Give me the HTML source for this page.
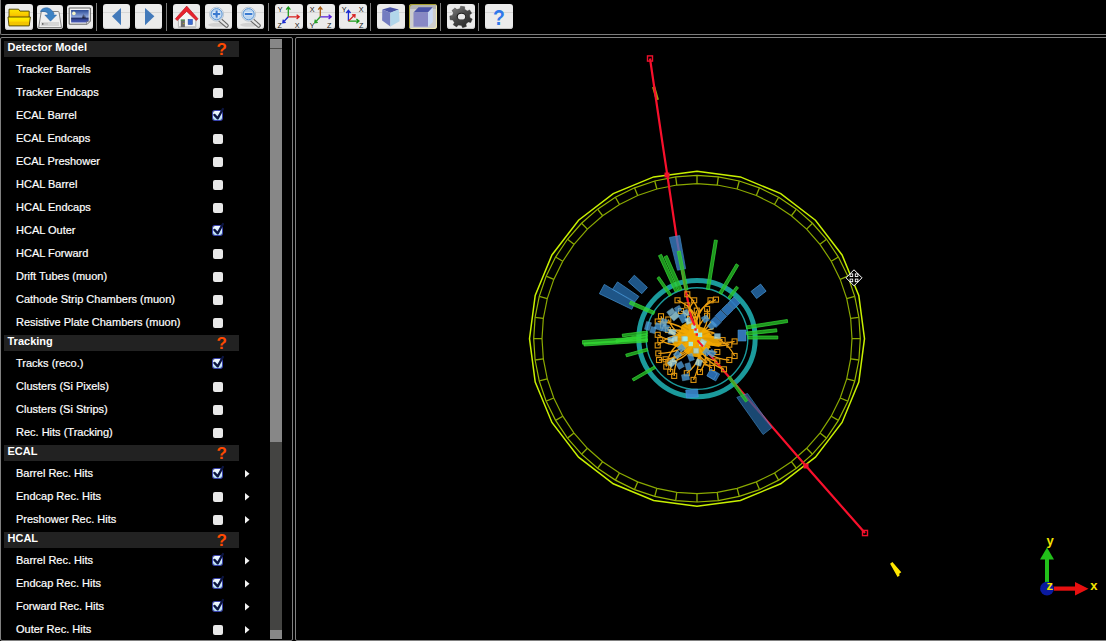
<!DOCTYPE html>
<html><head><meta charset="utf-8">
<style>
html,body{margin:0;padding:0;background:#000;width:1106px;height:641px;overflow:hidden}
body{position:relative;font-family:"Liberation Sans",sans-serif;color:#fff}
#tb{position:absolute;left:0;top:-6px;width:1200px;height:40px;border-left:1px solid #7c7c7c;border-bottom:1px solid #7c7c7c;border-bottom-left-radius:2px}
.btn{position:absolute;top:4px;width:27px;height:25px;background:#ebebeb;border-radius:3px;overflow:hidden;box-shadow:inset 0 -1px 0 #c4c4c4}
.btn:before{content:"";position:absolute;left:0;right:0;top:8px;height:1px;background:#d6d6d6}
.btn svg{position:absolute;left:0;top:0}
.btn.act:before{display:none}
.sep{position:absolute;top:3px;width:1px;height:28px;background:#7c7c7c}
#panel{position:absolute;left:0;top:37px;width:291px;height:602px;border:1px solid #808080;border-radius:2px}
#canvas{position:absolute;left:295px;top:37px;width:900px;height:602px;border:1px solid #808080;border-radius:2px}
.hdr{position:absolute;left:4px;width:235px;height:16px;background:#222}
.ht{position:absolute;left:7.5px;font-weight:bold;font-size:11px;line-height:13px;color:#fff}
.it{position:absolute;left:16px;font-size:11px;line-height:13px;color:#fff;white-space:nowrap;-webkit-text-stroke:0.2px #fff}
.q{position:absolute;left:216.5px;font-weight:bold;font-size:17px;line-height:18px;color:#ff4a00}
.cb{position:absolute;left:213px;width:10px;height:10px;border-radius:2px;background:#e8e8e8}
.cb.ck{background:linear-gradient(#f6faff,#b4dcf8);box-shadow:0 0 0 1px #3a44b0;width:9px;height:9px;left:213px}
.ar{position:absolute;left:245px}
#sb{position:absolute;left:270px;top:39px;width:12px;height:600px}
</style></head><body>
<div id="tb"></div>
<!-- toolbar buttons -->
<div class="btn" style="left:5px;width:28px;height:25.5px"><svg width="28" height="26" viewBox="0 0 28 26">
 <defs><linearGradient id="fg" x1="0" y1="0" x2="0" y2="1"><stop offset="0" stop-color="#fff400"/><stop offset="0.45" stop-color="#ffe000"/><stop offset="0.6" stop-color="#f4c400"/><stop offset="1" stop-color="#f0c800"/></linearGradient>
 <linearGradient id="bg1" x1="0" y1="0" x2="0" y2="1"><stop offset="0" stop-color="#ffe800"/><stop offset="0.6" stop-color="#f8c800"/><stop offset="1" stop-color="#f0a000"/></linearGradient></defs>
 <path d="M4 5.2 h9.6 l1.3 1.9 h9.3 v7.5 h-20.2z" fill="url(#bg1)" stroke="#4a4000" stroke-width="0.9"/>
 <path d="M3 13 h22.4 l-1.2 8.9 h-20.2z" fill="url(#fg)" stroke="#4a4000" stroke-width="0.9"/>
</svg></div>
<div class="btn" style="left:37px;width:26px;height:24px;top:5px"><svg width="26" height="24" viewBox="0 0 26 24">
 <path d="M4.2 6.5 h16.8 q0.9 0 1.1 1 l2.4 15 h-22.8 l2.4 -15 q0.2 -1 1.1 -1z" fill="#efefef" stroke="#6a6a6a" stroke-width="0.8"/>
 <rect x="4" y="17" width="18" height="4" fill="#d6d6d6"/>
 <rect x="5" y="18.2" width="1.5" height="1.5" fill="#555"/><rect x="7" y="18.6" width="4" height="0.7" fill="#aaa"/>
 <path d="M3.4 6.8 C4.5 2.5 10.5 1.5 14 4.5 L17 8 L16.6 10 L19.6 10 L13.5 16.2 L7.8 10 L10.8 10 L10.8 8.5 C9.5 6.5 6 6 3.4 6.8z" fill="#3c82c4" stroke="#2a62a0" stroke-width="0.5"/>
</svg></div>
<div class="btn" style="left:67px;width:26px;height:24px;top:5px"><svg width="26" height="24" viewBox="0 0 26 24">
 <defs><linearGradient id="sky" x1="0" y1="0" x2="0" y2="1"><stop offset="0" stop-color="#2c4c98"/><stop offset="0.55" stop-color="#90a8dc"/><stop offset="0.66" stop-color="#22306a"/><stop offset="0.8" stop-color="#3a4ca0"/><stop offset="1" stop-color="#4a5ab8"/></linearGradient></defs>
 <path d="M2.2 3 h21.1 v13.2 l-3 3 h-18.1z" fill="#f6f6f6" stroke="#505050" stroke-width="0.9"/>
 <path d="M4.1 5.1 h17.6 v11 l-1.5 1.5 h-16.1z" fill="url(#sky)"/>
 <circle cx="6.9" cy="8.4" r="1.8" fill="#f4f4c8"/>
 <path d="M15.2 13.3 l1 -4.2 l0.8 4.2z M17.2 13.3 l0.7 -3.6 l0.7 3.6z" fill="#1a1a2a"/>
 <path d="M19.5 19.2 l0 -2.6 l3.8 -0.4" fill="none" stroke="#777" stroke-width="0.6"/>
</svg></div>
<div class="sep" style="left:96px"></div>
<div class="btn" style="left:103px"><svg width="27" height="25" viewBox="0 0 27 25"><path d="M9 12.3 L18 4 V21.2z" fill="#4279ba"/></svg></div>
<div class="btn" style="left:135px"><svg width="27" height="25" viewBox="0 0 27 25"><path d="M10 4 L19.4 12.3 L10 21.2z" fill="#4279ba"/></svg></div>
<div class="sep" style="left:166px"></div>
<div class="btn" style="left:173px"><svg width="27" height="25" viewBox="0 0 27 25">
 <path d="M5.4 13 V23.3 H22.8 V13 L13.7 5z" fill="#f4f4f4" stroke="#9a9a9a" stroke-width="0.7"/>
 <rect x="5.4" y="22" width="17.4" height="1.5" fill="#c8c8c8"/>
 <path d="M2.4 14.8 L13.7 2.1 L25 14.8 L23.3 16.6 L13.7 7.4 L4.1 16.6z" fill="#e8222e" stroke="#b01018" stroke-width="0.6"/>
 <rect x="7.8" y="15.6" width="4.1" height="7.5" fill="#6c6c6c"/>
 <rect x="7.8" y="15.6" width="4.1" height="1" fill="#4a9a4a"/>
 <circle cx="10.8" cy="19.6" r="0.5" fill="#e8d000"/>
 <rect x="15.1" y="15.3" width="4.4" height="5.3" fill="#3a6ad0" stroke="#2a4aa0" stroke-width="0.5"/>
</svg></div>
<div class="btn" style="left:205px"><svg width="27" height="25" viewBox="0 0 27 25">
 <ellipse cx="12" cy="20.8" rx="9" ry="2" fill="#d2d2d2"/>
 <path d="M14 15 L21.6 21.6" stroke="#6a6a6a" stroke-width="4.4" stroke-linecap="round"/>
 <path d="M14 15 L21.6 21.6" stroke="#e6e6e6" stroke-width="2.2" stroke-linecap="round" stroke-dasharray="1.2 0.8"/>
 <circle cx="11.6" cy="10.2" r="7" fill="#e8eef4" stroke="#b8c4d0" stroke-width="1"/>
 <circle cx="11.6" cy="10.2" r="5.6" fill="#bcd6f0" stroke="#5a94d4" stroke-width="1"/>
 <path d="M11.6 6.4 V14 M7.8 10.2 H15.4" stroke="#fff" stroke-width="3.6"/>
 <path d="M11.6 6.6 V13.8 M8 10.2 H15.2" stroke="#3a7ad0" stroke-width="2.2"/>
</svg></div>
<div class="btn" style="left:237px"><svg width="27" height="25" viewBox="0 0 27 25">
 <ellipse cx="12" cy="20.8" rx="9" ry="2" fill="#d2d2d2"/>
 <path d="M14 15 L21.6 21.6" stroke="#6a6a6a" stroke-width="4.4" stroke-linecap="round"/>
 <path d="M14 15 L21.6 21.6" stroke="#e6e6e6" stroke-width="2.2" stroke-linecap="round" stroke-dasharray="1.2 0.8"/>
 <circle cx="11.6" cy="10.2" r="7" fill="#e8eef4" stroke="#b8c4d0" stroke-width="1"/>
 <circle cx="11.6" cy="10.2" r="5.6" fill="#bcd6f0" stroke="#5a94d4" stroke-width="1"/>
 <path d="M7.6 10.2 H15.6" stroke="#fff" stroke-width="3.6"/>
 <path d="M7.8 10.2 H15.4" stroke="#3a7ad0" stroke-width="2.2"/>
</svg></div>
<div class="sep" style="left:268px"></div>
<div class="btn" style="left:275px;width:28px"><svg width="28" height="25" viewBox="0 0 28 25" font-family="Liberation Sans" font-size="7.2">
 <text x="2.8" y="7.6" fill="#111">Y</text><text x="2.6" y="24" fill="#111">Z</text><text x="19.8" y="24" fill="#111">X</text>
 <path d="M13.3 12.8 V3.2 M11.2 5.6 L13.3 3 L15.4 5.6" stroke="#1a9a1a" stroke-width="1.3" fill="none"/>
 <path d="M13.3 12.8 H24 M21.6 10.7 L24.2 12.8 L21.6 14.9" stroke="#d82020" stroke-width="1.3" fill="none"/>
 <path d="M13.3 12.8 L8 18.5 M8.3 15.7 L7.8 18.8 L10.8 18.4" stroke="#1a2ad0" stroke-width="1.3" fill="none"/>
</svg></div>
<div class="btn" style="left:307px;width:28px"><svg width="28" height="25" viewBox="0 0 28 25" font-family="Liberation Sans" font-size="7.2">
 <text x="2.8" y="7.6" fill="#111">X</text><text x="2.8" y="24" fill="#111">Y</text><text x="20" y="24" fill="#111">Z</text>
 <path d="M13.3 12.8 V3.2 M11.2 5.6 L13.3 3 L15.4 5.6" stroke="#a85a10" stroke-width="1.3" fill="none"/>
 <path d="M13.3 12.8 H24 M21.6 10.7 L24.2 12.8 L21.6 14.9" stroke="#5a20d8" stroke-width="1.3" fill="none"/>
 <path d="M13.3 12.8 L8 18.5 M8.3 15.7 L7.8 18.8 L10.8 18.4" stroke="#28a028" stroke-width="1.3" fill="none"/>
</svg></div>
<div class="btn" style="left:339px;width:28px"><svg width="28" height="25" viewBox="0 0 28 25" font-family="Liberation Sans" font-size="7.2">
 <text x="2.8" y="7.6" fill="#111">Y</text><text x="19.8" y="7.6" fill="#111">X</text><text x="20" y="24" fill="#111">Z</text>
 <path d="M9.4 17.1 V6.5 M7.3 9 L9.4 6.3 L11.5 9" stroke="#1a2ad0" stroke-width="1.3" fill="none"/>
 <path d="M9.4 17.1 H19.8 M17.4 15 L20 17.1 L17.4 19.2" stroke="#1a9a1a" stroke-width="1.3" fill="none"/>
 <path d="M9.4 17.1 L15.8 10.8 M12.9 10.8 L16 10.6 L15.8 13.7" stroke="#d82020" stroke-width="1.3" fill="none"/>
</svg></div>
<div class="sep" style="left:370px"></div>
<div class="btn" style="left:377px;width:27.5px"><svg width="28" height="25" viewBox="0 0 28 25">
 <path d="M5.3 5.6 L13.1 3.2 L21.8 5.6 L13.4 8.8z" fill="#4a54a8"/>
 <path d="M5.3 5.6 L13.4 8.8 L13.4 22.5 L5.1 16.6z" fill="#737cc0"/>
 <path d="M13.4 8.8 L21.8 5.6 L22.6 17.2 L13.4 22.5z" fill="#b2d6ea"/>
</svg></div>
<div class="btn act" style="left:409px;width:28px;background:linear-gradient(#b4b4b4 0,#b4b4b4 5.5px,#cdcdcd 5.5px);box-shadow:inset 1px 1px 0 #a8a030, inset -1px -1px 0 #ece6b0"><svg width="28" height="25" viewBox="0 0 28 25">
 <path d="M4.5 8.5 L9.5 3.2 L23.8 3.2 L19 8.5z" fill="#4a54a8"/>
 <rect x="4.5" y="8.5" width="14.5" height="14.2" fill="#8888c4"/>
 <path d="M19 8.5 L23.8 3.2 L23.8 18 L19 22.7z" fill="#c8d8f4"/>
</svg></div>
<div class="sep" style="left:440px"></div>
<div class="btn" style="left:447px;width:27.5px"><svg width="28" height="25" viewBox="0 0 28 25">
 <defs><linearGradient id="gg" x1="0" y1="0" x2="1" y2="1"><stop offset="0" stop-color="#8a8a8a"/><stop offset="0.45" stop-color="#4a4a4a"/><stop offset="1" stop-color="#222"/></linearGradient></defs>
 <g transform="translate(14.1 13) scale(1.03 0.98) rotate(8)">
 <path d="M-2.29 -8.29 L-1.96 -10.82 L1.96 -10.82 L2.29 -8.29 L5.05 -6.96 L7.24 -8.28 L9.69 -5.21 L7.91 -3.38 L8.59 -0.39 L10.99 0.49 L10.11 4.32 L7.57 4.08 L5.66 6.48 L6.47 8.90 L2.93 10.60 L1.54 8.46 L-1.54 8.46 L-2.93 10.60 L-6.47 8.90 L-5.66 6.48 L-7.57 4.08 L-10.11 4.32 L-10.99 0.49 L-8.59 -0.39 L-7.91 -3.38 L-9.69 -5.21 L-7.24 -8.28 L-5.05 -6.96Z" fill="url(#gg)" stroke="#333" stroke-width="0.4" stroke-linejoin="round"/>
 </g>
 <ellipse cx="14.3" cy="12.4" rx="4.6" ry="3.7" fill="#1a1a1a"/>
 <ellipse cx="14.5" cy="12.7" rx="3.7" ry="2.9" fill="#ececec"/>
</svg></div>
<div class="sep" style="left:478px"></div>
<div class="btn" style="left:485px;width:27.5px"><svg width="28" height="25" viewBox="0 0 28 25"><text transform="translate(14 21.1) scale(0.86 1)" x="0" y="0" text-anchor="middle" font-family="Liberation Sans" font-weight="bold" font-size="22.5" fill="#2f78ea">?</text></svg></div>

<div id="panel"></div>
<div id="canvas"></div>
<!-- scrollbar -->
<div style="position:absolute;left:270px;top:39px;width:12px;height:9px;background:#878787"></div>
<div style="position:absolute;left:270px;top:48px;width:12px;height:1px;background:#4a4a48"></div>
<div style="position:absolute;left:270px;top:49px;width:12px;height:393px;background:#878787"></div>
<div style="position:absolute;left:270px;top:442px;width:12px;height:188px;background:#444442"></div>
<div style="position:absolute;left:270px;top:630px;width:12px;height:9px;background:#878787"></div>

<div class="hdr" style="top:41px"></div>
<div class="ht" style="top:40.99px">Detector Model</div>
<div class="q" style="top:41.3px">?</div>
<div class="it" style="top:62.79px">Tracker Barrels</div>
<div class="cb" style="top:64.8px"></div>
<div class="it" style="top:85.79px">Tracker Endcaps</div>
<div class="cb" style="top:87.8px"></div>
<div class="it" style="top:108.79px">ECAL Barrel</div>
<div class="cb ck" style="top:110.8px"><svg width="14" height="16" viewBox="0 0 14 16" style="position:absolute;left:-1px;top:-4px"><path d="M2.4 7.9 L5.7 11.4 L10.9 2" stroke="#0b1440" stroke-width="2.3" fill="none" stroke-linecap="round" stroke-linejoin="round"/></svg></div>
<div class="it" style="top:131.79px">ECAL Endcaps</div>
<div class="cb" style="top:133.8px"></div>
<div class="it" style="top:154.79px">ECAL Preshower</div>
<div class="cb" style="top:156.8px"></div>
<div class="it" style="top:177.79px">HCAL Barrel</div>
<div class="cb" style="top:179.8px"></div>
<div class="it" style="top:200.79px">HCAL Endcaps</div>
<div class="cb" style="top:202.8px"></div>
<div class="it" style="top:223.79px">HCAL Outer</div>
<div class="cb ck" style="top:225.8px"><svg width="14" height="16" viewBox="0 0 14 16" style="position:absolute;left:-1px;top:-4px"><path d="M2.4 7.9 L5.7 11.4 L10.9 2" stroke="#0b1440" stroke-width="2.3" fill="none" stroke-linecap="round" stroke-linejoin="round"/></svg></div>
<div class="it" style="top:246.79px">HCAL Forward</div>
<div class="cb" style="top:248.8px"></div>
<div class="it" style="top:269.79px">Drift Tubes (muon)</div>
<div class="cb" style="top:271.8px"></div>
<div class="it" style="top:292.79px">Cathode Strip Chambers (muon)</div>
<div class="cb" style="top:294.8px"></div>
<div class="it" style="top:315.79px">Resistive Plate Chambers (muon)</div>
<div class="cb" style="top:317.8px"></div>
<div class="hdr" style="top:335px"></div>
<div class="ht" style="top:334.99px">Tracking</div>
<div class="q" style="top:335.3px">?</div>
<div class="it" style="top:356.79px">Tracks (reco.)</div>
<div class="cb ck" style="top:358.8px"><svg width="14" height="16" viewBox="0 0 14 16" style="position:absolute;left:-1px;top:-4px"><path d="M2.4 7.9 L5.7 11.4 L10.9 2" stroke="#0b1440" stroke-width="2.3" fill="none" stroke-linecap="round" stroke-linejoin="round"/></svg></div>
<div class="it" style="top:379.79px">Clusters (Si Pixels)</div>
<div class="cb" style="top:381.8px"></div>
<div class="it" style="top:402.79px">Clusters (Si Strips)</div>
<div class="cb" style="top:404.8px"></div>
<div class="it" style="top:425.79px">Rec. Hits (Tracking)</div>
<div class="cb" style="top:427.8px"></div>
<div class="hdr" style="top:445px"></div>
<div class="ht" style="top:444.99px">ECAL</div>
<div class="q" style="top:445.3px">?</div>
<div class="it" style="top:466.79px">Barrel Rec. Hits</div>
<div class="cb ck" style="top:468.8px"><svg width="14" height="16" viewBox="0 0 14 16" style="position:absolute;left:-1px;top:-4px"><path d="M2.4 7.9 L5.7 11.4 L10.9 2" stroke="#0b1440" stroke-width="2.3" fill="none" stroke-linecap="round" stroke-linejoin="round"/></svg></div>
<svg class="ar" style="top:470.4px" width="5" height="8" viewBox="0 0 5 8"><path d="M0 0 L4.5 3.7 L0 7.4Z" fill="#f2f2f2"/></svg>
<div class="it" style="top:489.79px">Endcap Rec. Hits</div>
<div class="cb" style="top:491.8px"></div>
<svg class="ar" style="top:493.4px" width="5" height="8" viewBox="0 0 5 8"><path d="M0 0 L4.5 3.7 L0 7.4Z" fill="#f2f2f2"/></svg>
<div class="it" style="top:512.79px">Preshower Rec. Hits</div>
<div class="cb" style="top:514.8px"></div>
<svg class="ar" style="top:516.4px" width="5" height="8" viewBox="0 0 5 8"><path d="M0 0 L4.5 3.7 L0 7.4Z" fill="#f2f2f2"/></svg>
<div class="hdr" style="top:532px"></div>
<div class="ht" style="top:531.99px">HCAL</div>
<div class="q" style="top:532.3px">?</div>
<div class="it" style="top:553.79px">Barrel Rec. Hits</div>
<div class="cb ck" style="top:555.8px"><svg width="14" height="16" viewBox="0 0 14 16" style="position:absolute;left:-1px;top:-4px"><path d="M2.4 7.9 L5.7 11.4 L10.9 2" stroke="#0b1440" stroke-width="2.3" fill="none" stroke-linecap="round" stroke-linejoin="round"/></svg></div>
<svg class="ar" style="top:557.4px" width="5" height="8" viewBox="0 0 5 8"><path d="M0 0 L4.5 3.7 L0 7.4Z" fill="#f2f2f2"/></svg>
<div class="it" style="top:576.79px">Endcap Rec. Hits</div>
<div class="cb ck" style="top:578.8px"><svg width="14" height="16" viewBox="0 0 14 16" style="position:absolute;left:-1px;top:-4px"><path d="M2.4 7.9 L5.7 11.4 L10.9 2" stroke="#0b1440" stroke-width="2.3" fill="none" stroke-linecap="round" stroke-linejoin="round"/></svg></div>
<svg class="ar" style="top:580.4px" width="5" height="8" viewBox="0 0 5 8"><path d="M0 0 L4.5 3.7 L0 7.4Z" fill="#f2f2f2"/></svg>
<div class="it" style="top:599.79px">Forward Rec. Hits</div>
<div class="cb ck" style="top:601.8px"><svg width="14" height="16" viewBox="0 0 14 16" style="position:absolute;left:-1px;top:-4px"><path d="M2.4 7.9 L5.7 11.4 L10.9 2" stroke="#0b1440" stroke-width="2.3" fill="none" stroke-linecap="round" stroke-linejoin="round"/></svg></div>
<svg class="ar" style="top:603.4px" width="5" height="8" viewBox="0 0 5 8"><path d="M0 0 L4.5 3.7 L0 7.4Z" fill="#f2f2f2"/></svg>
<div class="it" style="top:622.79px">Outer Rec. Hits</div>
<div class="cb" style="top:624.8px"></div>
<svg class="ar" style="top:626.4px" width="5" height="8" viewBox="0 0 5 8"><path d="M0 0 L4.5 3.7 L0 7.4Z" fill="#f2f2f2"/></svg>

<svg style="position:absolute;left:0;top:0" width="1106" height="641" viewBox="0 0 1106 641">
<polygon points="697.00,171.20 740.35,176.91 780.75,193.64 815.44,220.26 842.06,254.95 858.79,295.35 864.50,338.70 858.79,382.05 842.06,422.45 815.44,457.14 780.75,483.76 740.35,500.49 697.00,506.20 653.65,500.49 613.25,483.76 578.56,457.14 551.94,422.45 535.21,382.05 529.50,338.70 535.21,295.35 551.94,254.95 578.56,220.26 613.25,193.64 653.65,176.91" fill="none" stroke="#c8f000" stroke-width="1.5"/>
<polygon points="697.00,175.40 718.31,176.80 739.27,180.96 759.49,187.83 778.65,197.28 796.41,209.15 812.47,223.23 826.55,239.29 838.42,257.05 847.87,276.21 854.74,296.43 858.90,317.39 860.30,338.70 858.90,360.01 854.74,380.97 847.87,401.19 838.42,420.35 826.55,438.11 812.47,454.17 796.41,468.25 778.65,480.12 759.49,489.57 739.27,496.44 718.31,500.60 697.00,502.00 675.69,500.60 654.73,496.44 634.51,489.57 615.35,480.12 597.59,468.25 581.53,454.17 567.45,438.11 555.58,420.35 546.13,401.19 539.26,380.97 535.10,360.01 533.70,338.70 535.10,317.39 539.26,296.43 546.13,276.21 555.58,257.05 567.45,239.29 581.53,223.23 597.59,209.15 615.35,197.28 634.51,187.83 654.73,180.96 675.69,176.80" fill="none" stroke="#96b400" stroke-width="1.2"/>
<polygon points="697.00,183.70 717.23,185.03 737.12,188.98 756.32,195.50 774.50,204.47 791.36,215.73 806.60,229.10 819.97,244.34 831.23,261.20 840.20,279.38 846.72,298.58 850.67,318.47 852.00,338.70 850.67,358.93 846.72,378.82 840.20,398.02 831.23,416.20 819.97,433.06 806.60,448.30 791.36,461.67 774.50,472.93 756.32,481.90 737.12,488.42 717.23,492.37 697.00,493.70 676.77,492.37 656.88,488.42 637.68,481.90 619.50,472.93 602.64,461.67 587.40,448.30 574.03,433.06 562.77,416.20 553.80,398.02 547.28,378.82 543.33,358.93 542.00,338.70 543.33,318.47 547.28,298.58 553.80,279.38 562.77,261.20 574.03,244.34 587.40,229.10 602.64,215.73 619.50,204.47 637.68,195.50 656.88,188.98 676.77,185.03" fill="none" stroke="#8aa800" stroke-width="1.2"/>
<path d="M697.00 183.70L697.00 175.40M717.23 185.03L718.31 176.80M737.12 188.98L739.27 180.96M756.32 195.50L759.49 187.83M774.50 204.47L778.65 197.28M791.36 215.73L796.41 209.15M806.60 229.10L812.47 223.23M819.97 244.34L826.55 239.29M831.23 261.20L838.42 257.05M840.20 279.38L847.87 276.21M846.72 298.58L854.74 296.43M850.67 318.47L858.90 317.39M852.00 338.70L860.30 338.70M850.67 358.93L858.90 360.01M846.72 378.82L854.74 380.97M840.20 398.02L847.87 401.19M831.23 416.20L838.42 420.35M819.97 433.06L826.55 438.11M806.60 448.30L812.47 454.17M791.36 461.67L796.41 468.25M774.50 472.93L778.65 480.12M756.32 481.90L759.49 489.57M737.12 488.42L739.27 496.44M717.23 492.37L718.31 500.60M697.00 493.70L697.00 502.00M676.77 492.37L675.69 500.60M656.88 488.42L654.73 496.44M637.68 481.90L634.51 489.57M619.50 472.93L615.35 480.12M602.64 461.67L597.59 468.25M587.40 448.30L581.53 454.17M574.03 433.06L567.45 438.11M562.77 416.20L555.58 420.35M553.80 398.02L546.13 401.19M547.28 378.82L539.26 380.97M543.33 358.93L535.10 360.01M542.00 338.70L533.70 338.70M543.33 318.47L535.10 317.39M547.28 298.58L539.26 296.43M553.80 279.38L546.13 276.21M562.77 261.20L555.58 257.05M574.03 244.34L567.45 239.29M587.40 229.10L581.53 223.23M602.64 215.73L597.59 209.15M619.50 204.47L615.35 197.28M637.68 195.50L634.51 187.83M656.88 188.98L654.73 180.96M676.77 185.03L675.69 176.80" stroke="#8aa800" stroke-width="1.3"/>
<circle cx="697" cy="338.6" r="58.2" fill="none" stroke="#1b9a9c" stroke-width="5"/>
<circle cx="697" cy="338.6" r="50.8" fill="none" stroke="#1b9a9c" stroke-width="1.4"/>
<line x1="653.6" y1="86.8" x2="657.4" y2="100" stroke="#b0b010" stroke-width="3.2" opacity="0.9"/>
<polyline points="650,58.5 662,140 667.2,174.4 676.2,235 685.6,290 692.5,324.3 696,338" fill="none" stroke="#f8102c" stroke-width="2.2"/>
<polyline points="697.4,340.4 729.3,377.2 806,466 865,533" fill="none" stroke="#f8102c" stroke-width="2.2"/>
<rect x="647.5" y="55.9" width="5" height="5.2" fill="none" stroke="#f0102c" stroke-width="1.4"/>
<rect x="862.5" y="530.4" width="5" height="5.2" fill="none" stroke="#f0102c" stroke-width="1.4"/>
<rect x="664.5" y="172.5" width="5" height="5" fill="#f0102c"/>
<rect x="803.5" y="463.5" width="5" height="5" fill="#f0102c"/>
<polygon points="599.4,293.7 604.3,284.4 634.9,302.5 631.8,309.3" fill="#24649f" stroke="#4aa0e4" stroke-width="0.8" opacity="0.85"/>
<polygon points="612.5,289.4 617.5,281.9 638.9,296.5 634.9,301.8" fill="#24649f" stroke="#4aa0e4" stroke-width="0.8" opacity="0.85"/>
<polygon points="628.4,281.9 634.3,275.2 647.4,287.5 641.8,293.7" fill="#24649f" stroke="#4aa0e4" stroke-width="0.8" opacity="0.85"/>
<polygon points="669.4,237.5 679.7,235.6 685.6,268.7 677.5,270.2" fill="#3a80c8" stroke="#4aa0e4" stroke-width="0.8" opacity="0.78"/>
<polygon points="751.1,291.4 760.6,284.1 766.1,291.2 756.6,298.5" fill="#24649f" stroke="#4aa0e4" stroke-width="0.8" opacity="0.9"/>
<polygon points="736.8,397.4 747.5,393.5 771.9,427.6 763.1,434.5" fill="#24649f" stroke="#4aa0e4" stroke-width="0.8" opacity="0.72"/>
<polygon points="738.0,330.0 746.0,330.0 746.0,341.0 738.0,341.0" fill="#3a80c8" stroke="#4aa0e4" stroke-width="0.6" opacity="0.9"/>
<polygon points="685.7,390.0 697.6,389.0 698.3,397.0 686.4,398.0" fill="#3a88d0" stroke="#4aa0e4" stroke-width="0.6" opacity="0.9"/>
<polygon points="711.1,369.0 719.7,374.0 715.7,381.0 707.1,376.0" fill="#2a6cb0" stroke="#4aa0e4" stroke-width="0.6" opacity="0.9"/>
<polygon points="728.0,303.0 734.0,297.0 740.0,303.0 734.0,309.0" fill="#2f78c0" stroke="#5aa8e8" stroke-width="0.6" opacity="0.9"/>
<polygon points="721.5,309.5 727.5,303.5 733.5,309.5 727.5,315.5" fill="#2f78c0" stroke="#5aa8e8" stroke-width="0.6" opacity="0.9"/>
<polygon points="715.2,315.8 720.8,310.2 726.8,316.2 721.2,321.8" fill="#2f78c0" stroke="#5aa8e8" stroke-width="0.6" opacity="0.9"/>
<polygon points="710.0,321.5 715.0,316.5 721.0,322.5 716.0,327.5" fill="#2f78c0" stroke="#5aa8e8" stroke-width="0.6" opacity="0.9"/>
<polygon points="714.4,240.0 706.4,289.2 709.4,289.6 717.4,240.4" fill="rgba(38,190,38,0.78)" stroke="#34d834" stroke-width="0.8" stroke-opacity="0.9"/>
<polygon points="736.1,263.8 718.9,292.8 721.5,294.4 738.7,265.4" fill="rgba(38,190,38,0.78)" stroke="#34d834" stroke-width="0.8" stroke-opacity="0.9"/>
<polygon points="736.3,286.2 727.9,297.3 730.1,298.9 738.5,287.8" fill="rgba(38,190,38,0.78)" stroke="#34d834" stroke-width="0.8" stroke-opacity="0.9"/>
<polygon points="787.3,319.5 746.4,325.9 746.8,328.9 787.7,322.5" fill="rgba(38,190,38,0.78)" stroke="#34d834" stroke-width="0.8" stroke-opacity="0.9"/>
<polygon points="776.6,328.8 746.4,332.0 746.8,335.0 777.0,331.8" fill="rgba(38,190,38,0.78)" stroke="#34d834" stroke-width="0.8" stroke-opacity="0.9"/>
<polygon points="777.8,336.0 748.0,336.0 748.0,339.0 777.8,339.0" fill="rgba(38,190,38,0.78)" stroke="#34d834" stroke-width="0.8" stroke-opacity="0.9"/>
<polygon points="626.5,356.8 647.9,350.9 647.1,348.3 625.7,354.2" fill="rgba(38,190,38,0.78)" stroke="#34d834" stroke-width="0.8" stroke-opacity="0.9"/>
<polygon points="633.6,381.0 655.7,368.3 654.3,366.1 632.2,378.8" fill="rgba(38,190,38,0.78)" stroke="#34d834" stroke-width="0.8" stroke-opacity="0.9"/>
<polygon points="658.5,255.7 675.0,291.9 678.0,290.5 661.5,254.3" fill="rgba(38,190,38,0.78)" stroke="#34d834" stroke-width="0.8" stroke-opacity="0.9"/>
<polygon points="664.1,256.9 679.1,290.7 682.1,289.3 667.1,255.5" fill="rgba(38,190,38,0.78)" stroke="#34d834" stroke-width="0.8" stroke-opacity="0.9"/>
<polygon points="657.0,278.2 669.5,296.3 671.7,294.7 659.2,276.6" fill="rgba(38,190,38,0.78)" stroke="#34d834" stroke-width="0.8" stroke-opacity="0.9"/>
<polygon points="677.2,251.6 685.0,290.3 688.0,289.7 680.2,251.0" fill="rgba(38,190,38,0.78)" stroke="#34d834" stroke-width="0.8" stroke-opacity="0.9"/>
<polygon points="629.3,304.0 653.6,314.6 655.0,311.6 630.7,301.0" fill="rgba(50,215,50,0.75)" stroke="#34d834" stroke-width="0.8" stroke-opacity="0.9"/>
<polygon points="582.6,344.2 647.5,340.2 647.3,336.6 582.4,340.6" fill="rgba(50,215,50,0.75)" stroke="#34d834" stroke-width="0.8" stroke-opacity="0.9"/>
<polygon points="584.1,346.0 647.5,342.0 647.3,339.0 583.9,343.0" fill="rgba(50,215,50,0.75)" stroke="#34d834" stroke-width="0.8" stroke-opacity="0.9"/>
<polygon points="616.5,342.5 647.7,336.2 647.1,333.6 615.9,339.9" fill="rgba(50,215,50,0.75)" stroke="#34d834" stroke-width="0.8" stroke-opacity="0.9"/>
<polygon points="622.6,336.8 647.6,333.7 647.2,331.1 622.2,334.2" fill="rgba(38,190,38,0.78)" stroke="#34d834" stroke-width="0.8" stroke-opacity="0.9"/>
<polygon points="727.9,377.7 745.5,402.1 747.7,400.5 730.1,376.1" fill="rgba(38,190,38,0.78)" stroke="#34d834" stroke-width="0.8" stroke-opacity="0.9"/>
<path d="M696 338Q703.2 311.1 677.5 300.3M696 338Q707.2 313.1 687.3 294.3M696 338Q680.0 319.9 694.2 300.3M696 338Q692.7 315.1 710.5 300.3M696 338Q689.7 310.3 716.0 299.6M696 338Q691.2 324.1 696.8 310.6M696 338Q710.1 326.7 707.1 308.9M696 338Q697.0 324.6 707.1 315.8M696 338Q698.0 320.0 687.3 305.4M696 338Q669.0 342.4 661.0 316.2M696 338Q675.9 338.1 668.3 319.5M696 338Q680.0 322.3 657.7 321.5M696 338Q677.1 338.1 663.0 325.5M696 338Q676.0 346.3 657.7 334.8M696 338Q678.8 350.7 660.3 340.1M696 338Q674.4 329.0 657.7 345.4M696 338Q680.4 353.5 658.3 353.4M696 338Q683.7 359.4 659.0 360.0M696 338Q687.9 358.8 665.6 359.3M696 338Q689.9 359.0 668.3 362.6M696 338Q670.0 340.7 666.3 366.6M696 338Q671.7 346.3 670.3 371.9M696 338Q674.6 350.9 674.2 375.9M696 338Q705.3 359.2 686.8 373.2M696 338Q703.2 359.5 693.5 379.9M696 338Q693.8 354.0 707.4 362.6M696 338Q697.9 357.7 717.3 361.3M696 338Q701.8 352.3 717.3 352.0M696 338Q709.7 333.4 722.6 340.1M696 338Q711.1 348.8 729.3 344.7M696 338Q714.5 348.2 734.6 341.4M696 338Q706.2 358.8 729.3 360.0M696 338Q722.3 332.1 734.6 356.0M696 338Q701.5 361.3 724.0 369.3M696 338Q697.7 319.4 681.0 311.0M696 338Q683.6 328.4 668.0 330.0M696 338Q712.8 353.3 700.0 372.0M696 338Q693.0 358.9 712.0 368.0M696 338Q706.4 338.8 714.6 345.2M696 338Q687.0 334.6 678.8 329.7M696 338Q691.3 328.7 691.3 318.3M696 338Q703.4 336.8 709.9 333.1M696 338Q689.6 340.5 683.0 338.5M696 338Q700.1 330.6 694.9 324.0M696 338Q689.9 339.1 683.7 338.2M696 338Q695.6 343.4 693.9 348.6M696 338Q688.7 327.9 677.1 332.4M696 338Q690.1 333.1 689.7 325.4M696 338Q700.6 342.0 706.5 343.4M696 338Q707.2 333.3 717.6 339.5M696 338Q694.5 343.2 693.6 348.6M696 338Q687.9 337.2 684.8 329.7M696 338Q705.4 331.7 710.8 321.8M696 338Q699.8 330.3 694.9 323.3M696 338Q705.6 336.3 714.6 332.8M696 338Q689.9 342.4 683.6 346.3M696 338Q688.3 337.4 685.7 344.7M696 338Q690.3 339.0 685.3 341.8M696 338Q702.9 343.3 710.4 347.7M696 338Q703.0 329.3 713.6 332.7M696 338Q696.6 345.1 700.0 351.3M696 338Q704.8 335.3 713.7 333.4M696 338Q698.5 347.8 708.6 348.0M696 338Q689.3 342.9 681.7 339.6M696 338Q695.7 328.8 696.0 319.7M696 338Q689.5 332.2 689.9 323.5M696 338Q703.8 338.2 710.4 334.0M696 338Q703.3 330.4 713.7 328.5M696 338Q694.7 332.1 689.0 330.1M696 338Q684.4 339.4 673.4 335.6M696 338Q697.5 345.8 699.0 353.6M696 338Q692.8 328.9 683.8 325.4M696 338Q693.9 332.1 696.7 326.6M696 338Q690.1 347.7 678.8 349.2M696 338Q685.6 330.5 675.8 338.8M696 338Q694.5 329.7 700.1 323.5M696 338Q692.2 331.0 684.3 329.8M696 338Q699.8 330.4 693.5 324.8" fill="none" stroke="#eea010" stroke-width="1.3"/>
<path d="M681.5 325.5 L688.2 321.5 L694.8 323.5 L700.1 326.8 L705.4 328.2 L710.7 334.8 L717.3 338.8 L722 344.1 L718.7 346.7 L710.7 345.4 L708 350.7 L702.7 354.7 L697.4 357.3 L689.5 356 L684.2 350.7 L678.9 348 L673.6 345.4 L670.9 340.1 L676.2 334.8 L680.2 330.8Z" fill="#f2a800" opacity="0.92"/>
<ellipse cx="694" cy="337" rx="8" ry="7" fill="#f4ac00"/>
<rect x="675.0" y="297.8" width="5" height="5" fill="none" stroke="#dc9410" stroke-width="1.1"/>
<rect x="684.8" y="291.8" width="5" height="5" fill="none" stroke="#dc9410" stroke-width="1.1"/>
<rect x="691.7" y="297.8" width="5" height="5" fill="none" stroke="#dc9410" stroke-width="1.1"/>
<rect x="708.0" y="297.8" width="5" height="5" fill="none" stroke="#dc9410" stroke-width="1.1"/>
<rect x="713.5" y="297.1" width="5" height="5" fill="none" stroke="#dc9410" stroke-width="1.1"/>
<rect x="694.3" y="308.1" width="5" height="5" fill="none" stroke="#dc9410" stroke-width="1.1"/>
<rect x="704.6" y="306.4" width="5" height="5" fill="none" stroke="#dc9410" stroke-width="1.1"/>
<rect x="704.6" y="313.3" width="5" height="5" fill="none" stroke="#dc9410" stroke-width="1.1"/>
<rect x="684.8" y="302.9" width="5" height="5" fill="none" stroke="#dc9410" stroke-width="1.1"/>
<rect x="658.5" y="313.7" width="5" height="5" fill="none" stroke="#dc9410" stroke-width="1.1"/>
<rect x="665.8" y="317.0" width="5" height="5" fill="none" stroke="#dc9410" stroke-width="1.1"/>
<rect x="655.2" y="319.0" width="5" height="5" fill="none" stroke="#dc9410" stroke-width="1.1"/>
<rect x="660.5" y="323.0" width="5" height="5" fill="none" stroke="#dc9410" stroke-width="1.1"/>
<rect x="655.2" y="332.3" width="5" height="5" fill="none" stroke="#dc9410" stroke-width="1.1"/>
<rect x="657.8" y="337.6" width="5" height="5" fill="none" stroke="#dc9410" stroke-width="1.1"/>
<rect x="655.2" y="342.9" width="5" height="5" fill="none" stroke="#dc9410" stroke-width="1.1"/>
<rect x="655.8" y="350.9" width="5" height="5" fill="none" stroke="#dc9410" stroke-width="1.1"/>
<rect x="656.5" y="357.5" width="5" height="5" fill="none" stroke="#dc9410" stroke-width="1.1"/>
<rect x="663.1" y="356.8" width="5" height="5" fill="none" stroke="#dc9410" stroke-width="1.1"/>
<rect x="665.8" y="360.1" width="5" height="5" fill="none" stroke="#dc9410" stroke-width="1.1"/>
<rect x="663.8" y="364.1" width="5" height="5" fill="none" stroke="#dc9410" stroke-width="1.1"/>
<rect x="667.8" y="369.4" width="5" height="5" fill="none" stroke="#dc9410" stroke-width="1.1"/>
<rect x="671.7" y="373.4" width="5" height="5" fill="none" stroke="#dc9410" stroke-width="1.1"/>
<rect x="684.3" y="370.7" width="5" height="5" fill="none" stroke="#dc9410" stroke-width="1.1"/>
<rect x="691.0" y="377.4" width="5" height="5" fill="none" stroke="#dc9410" stroke-width="1.1"/>
<rect x="704.9" y="360.1" width="5" height="5" fill="none" stroke="#dc9410" stroke-width="1.1"/>
<rect x="714.8" y="358.8" width="5" height="5" fill="none" stroke="#dc9410" stroke-width="1.1"/>
<rect x="714.8" y="349.5" width="5" height="5" fill="none" stroke="#dc9410" stroke-width="1.1"/>
<rect x="720.1" y="337.6" width="5" height="5" fill="none" stroke="#dc9410" stroke-width="1.1"/>
<rect x="726.8" y="342.2" width="5" height="5" fill="none" stroke="#dc9410" stroke-width="1.1"/>
<rect x="732.1" y="338.9" width="5" height="5" fill="none" stroke="#dc9410" stroke-width="1.1"/>
<rect x="726.8" y="357.5" width="5" height="5" fill="none" stroke="#dc9410" stroke-width="1.1"/>
<rect x="732.1" y="353.5" width="5" height="5" fill="none" stroke="#dc9410" stroke-width="1.1"/>
<rect x="721.5" y="366.8" width="5" height="5" fill="none" stroke="#dc9410" stroke-width="1.1"/>
<rect x="678.5" y="308.5" width="5" height="5" fill="none" stroke="#dc9410" stroke-width="1.1"/>
<rect x="665.5" y="327.5" width="5" height="5" fill="none" stroke="#dc9410" stroke-width="1.1"/>
<rect x="697.5" y="369.5" width="5" height="5" fill="none" stroke="#dc9410" stroke-width="1.1"/>
<rect x="709.5" y="365.5" width="5" height="5" fill="none" stroke="#dc9410" stroke-width="1.1"/>
<polygon points="669.9,316.5 676.0,311.3 679.9,315.9 673.8,321.1" fill="#a6e0ee" stroke="#70b8e8" stroke-width="0.5" opacity="0.78"/>
<polygon points="678.3,316.2 683.5,313.2 687.5,320.2 682.3,323.2" fill="#4a9ad8" stroke="#70b8e8" stroke-width="0.5" opacity="0.78"/>
<polygon points="684.8,318.9 689.5,317.2 691.6,322.9 686.9,324.6" fill="#a6e0ee" stroke="#70b8e8" stroke-width="0.5" opacity="0.78"/>
<polygon points="656.3,322.6 663.8,325.3 661.7,331.0 654.2,328.3" fill="#4a9ad8" stroke="#70b8e8" stroke-width="0.5" opacity="0.78"/>
<polygon points="664.0,323.9 669.6,325.9 667.2,332.5 661.6,330.5" fill="#4a9ad8" stroke="#70b8e8" stroke-width="0.5" opacity="0.78"/>
<polygon points="669.2,329.0 676.1,330.2 675.2,335.2 668.3,334.0" fill="#a6e0ee" stroke="#70b8e8" stroke-width="0.5" opacity="0.78"/>
<polygon points="672.4,336.3 677.4,336.3 677.4,341.3 672.4,341.3" fill="#a6e0ee" stroke="#70b8e8" stroke-width="0.5" opacity="0.78"/>
<polygon points="667.9,337.6 673.9,337.6 673.9,342.6 667.9,342.6" fill="#a6e0ee" stroke="#70b8e8" stroke-width="0.5" opacity="0.78"/>
<polygon points="681.7,336.3 686.7,336.3 686.7,341.3 681.7,341.3" fill="#a6e0ee" stroke="#70b8e8" stroke-width="0.5" opacity="0.78"/>
<polygon points="701.3,317.8 706.5,314.8 709.5,320.0 704.3,323.0" fill="#4a9ad8" stroke="#70b8e8" stroke-width="0.5" opacity="0.78"/>
<polygon points="707.4,325.9 712.4,320.9 716.6,325.1 711.6,330.1" fill="#4a9ad8" stroke="#70b8e8" stroke-width="0.5" opacity="0.78"/>
<polygon points="714.3,333.6 720.3,333.6 720.3,338.6 714.3,338.6" fill="#a6e0ee" stroke="#70b8e8" stroke-width="0.5" opacity="0.78"/>
<polygon points="701.6,338.6 706.8,341.6 703.8,346.8 698.6,343.8" fill="#a6e0ee" stroke="#70b8e8" stroke-width="0.5" opacity="0.78"/>
<polygon points="706.3,347.8 710.9,351.6 707.1,356.2 702.5,352.4" fill="#4a9ad8" stroke="#70b8e8" stroke-width="0.5" opacity="0.78"/>
<polygon points="711.6,349.2 716.2,353.0 712.4,357.6 707.8,353.8" fill="#4a9ad8" stroke="#70b8e8" stroke-width="0.5" opacity="0.78"/>
<polygon points="677.3,347.6 681.9,343.8 685.7,348.4 681.1,352.2" fill="#4a9ad8" stroke="#70b8e8" stroke-width="0.5" opacity="0.78"/>
<polygon points="673.3,354.3 677.9,350.5 681.7,355.1 677.1,358.9" fill="#4a9ad8" stroke="#70b8e8" stroke-width="0.5" opacity="0.78"/>
<polygon points="667.2,362.9 673.3,357.7 677.2,362.3 671.1,367.5" fill="#a6e0ee" stroke="#70b8e8" stroke-width="0.5" opacity="0.78"/>
<polygon points="676.1,364.2 681.3,361.2 684.3,366.4 679.1,369.4" fill="#4a9ad8" stroke="#70b8e8" stroke-width="0.5" opacity="0.78"/>
<polygon points="687.3,354.9 692.0,353.2 694.3,359.7 689.6,361.4" fill="#4a9ad8" stroke="#70b8e8" stroke-width="0.5" opacity="0.78"/>
<polygon points="684.9,363.9 689.7,362.6 691.5,369.3 686.7,370.6" fill="#4a9ad8" stroke="#70b8e8" stroke-width="0.5" opacity="0.78"/>
<polygon points="697.0,358.8 702.6,360.8 700.6,366.4 695.0,364.4" fill="#a6e0ee" stroke="#70b8e8" stroke-width="0.5" opacity="0.78"/>
<polygon points="693.6,348.2 698.6,348.2 698.6,353.2 693.6,353.2" fill="#a6e0ee" stroke="#70b8e8" stroke-width="0.5" opacity="0.78"/>
<polygon points="710.3,369.6 717.2,373.6 713.7,379.6 706.8,375.6" fill="#2a6cb0" stroke="#70b8e8" stroke-width="0.5" opacity="0.78"/>
<polygon points="681.5,374.9 688.4,373.6 689.5,379.5 682.6,380.8" fill="#4a9ad8" stroke="#70b8e8" stroke-width="0.5" opacity="0.78"/>
<polygon points="646.6,321.5 651.5,322.8 649.4,330.5 644.5,329.2" fill="#4a9ad8" stroke="#70b8e8" stroke-width="0.5" opacity="0.78"/>
<polygon points="651.4,326.5 656.2,327.7 654.6,333.5 649.8,332.3" fill="#4a9ad8" stroke="#70b8e8" stroke-width="0.5" opacity="0.78"/>
<rect x="691.3" y="324.6" width="4.4" height="4.4" fill="#9ef0f0" opacity="0.9"/>
<rect x="688.5999999999999" y="341.8" width="4.4" height="4.4" fill="#9ef0f0" opacity="0.9"/>
<rect x="697.8" y="332.6" width="4.4" height="4.4" fill="#9ef0f0" opacity="0.9"/>
<rect x="683.3" y="336.6" width="4.4" height="4.4" fill="#9ef0f0" opacity="0.9"/>
<rect x="699.1999999999999" y="341.8" width="4.4" height="4.4" fill="#9ef0f0" opacity="0.9"/>
<rect x="693.8" y="328.8" width="4.4" height="4.4" fill="#9ef0f0" opacity="0.9"/>
<polyline points="690.5,316 694.8,325.5" fill="none" stroke="#f8102c" stroke-width="2"/>
<polyline points="697.4,340.4 703,346.5" fill="none" stroke="#f8102c" stroke-width="2"/>
<rect x="694.3" y="328.3" width="2.4" height="2.4" fill="#f8102c"/>
<rect x="695.5999999999999" y="333.3" width="2.4" height="2.4" fill="#f8102c"/>
<polygon points="666.7,312.0 672.4,307.9 675.3,312.0 669.6,316.1" fill="#8ccbe6" stroke="#70b8e8" stroke-width="0.5" opacity="0.75"/>
<polygon points="674.2,308.3 679.3,305.3 681.8,309.7 676.7,312.7" fill="#4a9ad8" stroke="#70b8e8" stroke-width="0.5" opacity="0.75"/>
<polygon points="662.2,318.2 667.8,320.2 665.8,325.8 660.2,323.8" fill="#5aa6dc" stroke="#70b8e8" stroke-width="0.5" opacity="0.75"/>
<polygon points="682.6,311.0 687.3,309.3 689.4,315.0 684.7,316.7" fill="#8ccbe6" stroke="#70b8e8" stroke-width="0.5" opacity="0.75"/>
<polygon points="890.1,563.7 892.4,562 901.3,572.3 899.2,573.7 899.6,575.5 897.6,577" fill="#ffe600" opacity="1"/>
<g transform="translate(854 277.8)"><path d="M0 -8 L8 0 L0 8 L-8 0z" fill="#000" stroke="#fff" stroke-width="1"/><rect x="-3.9" y="-3.9" width="2.6" height="2.6" fill="none" stroke="#fff" stroke-width="0.9"/><rect x="1.3" y="-3.9" width="2.6" height="2.6" fill="none" stroke="#fff" stroke-width="0.9"/><rect x="-3.9" y="1.3" width="2.6" height="2.6" fill="none" stroke="#fff" stroke-width="0.9"/><rect x="1.3" y="1.3" width="2.6" height="2.6" fill="none" stroke="#fff" stroke-width="0.9"/></g>
<rect x="1045" y="558.5" width="4" height="30" fill="#22c01a"/>
<path d="M1040 559.5 L1047 547.5 L1054 559.5z" fill="#22c01a"/>
<rect x="1054" y="586.5" width="22" height="4.2" fill="#e81010"/>
<path d="M1075 582 L1088.5 588.7 L1075 595.5z" fill="#e81010"/>
<circle cx="1047" cy="588.7" r="6.9" fill="#0a1aa0"/>
<text x="1046.5" y="545.3" font-family="Liberation Sans" font-weight="bold" font-size="13" fill="#f2e400">y</text>
<text x="1090.2" y="589.5" font-family="Liberation Sans" font-weight="bold" font-size="13" fill="#f2e400">x</text>
<text x="1046.6" y="589.5" font-family="Liberation Sans" font-weight="bold" font-size="13" fill="#f2e400">z</text>
</svg>
</body></html>
